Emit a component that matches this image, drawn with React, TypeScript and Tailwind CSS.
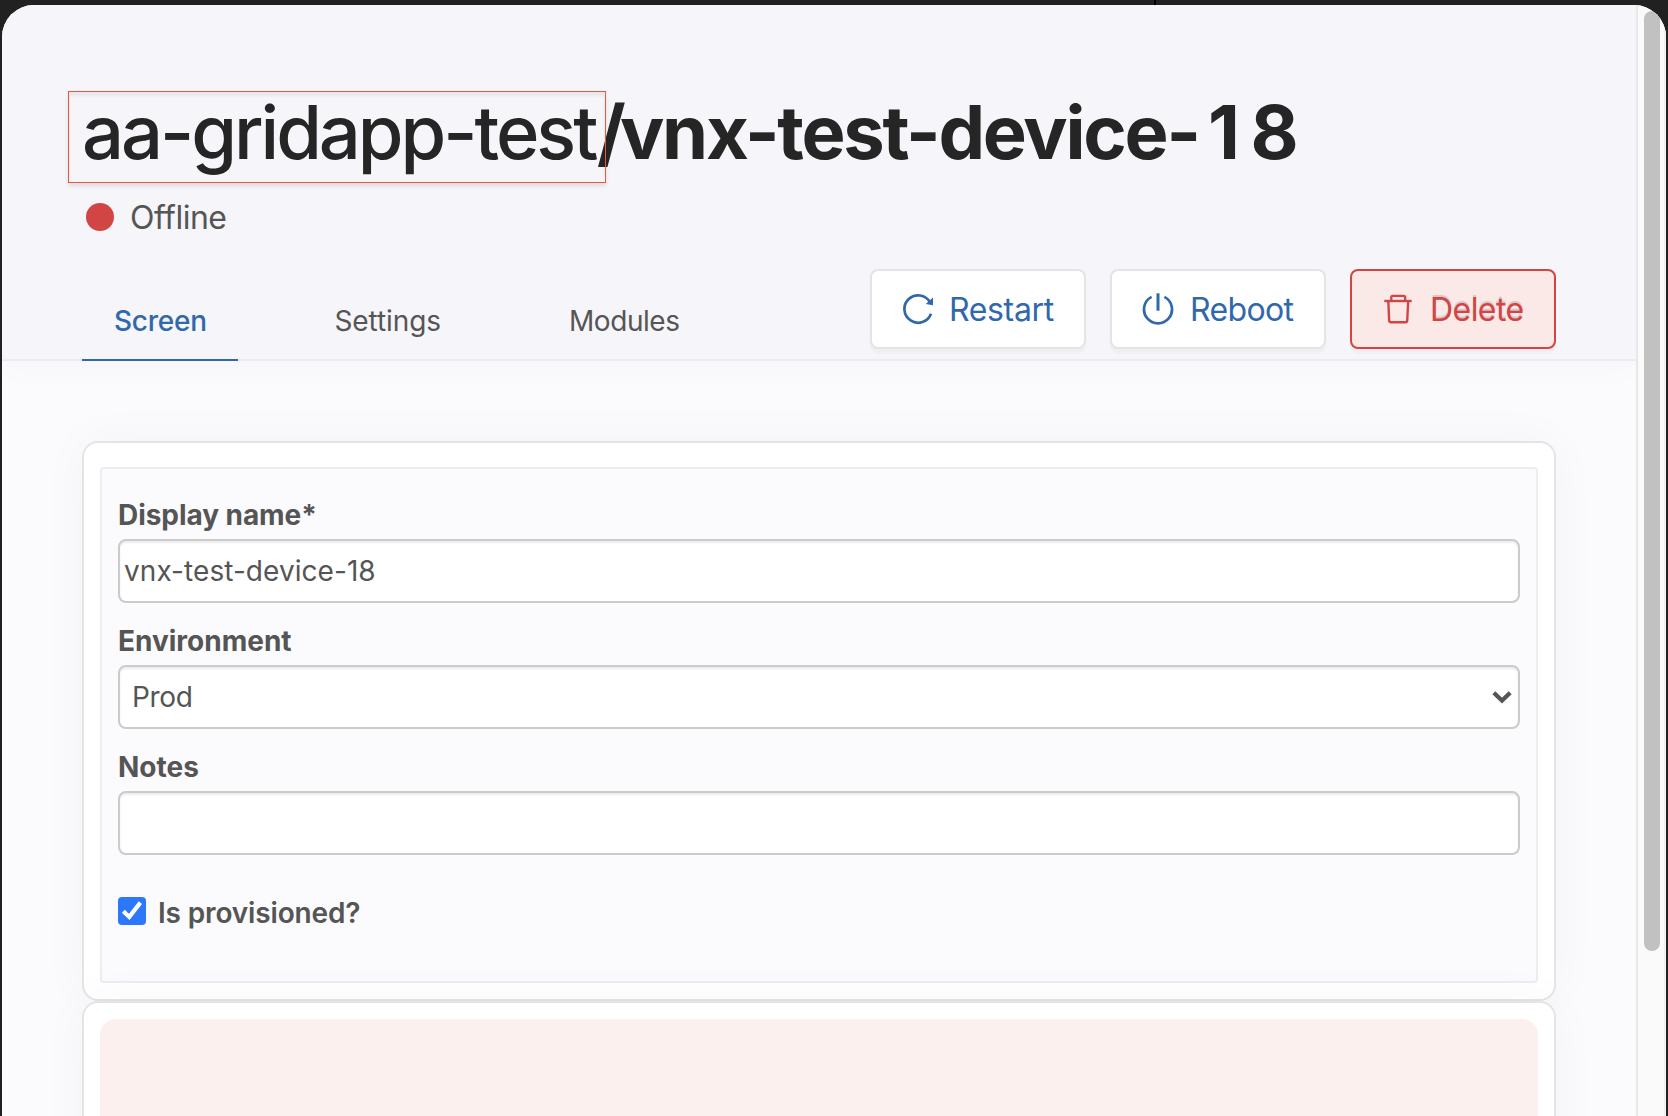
import type { ReactNode } from "react";

function RestartIcon() {
  return (
    <svg className="size-8 shrink-0" viewBox="0 0 32 32" fill="none" stroke="currentColor">
      <path d="M28 9.2A13.7 13.7 0 1 0 29 20.7" strokeWidth="2.7" />
      <path d="M31 4.6v7.6l-7.2-1.1z" fill="currentColor" stroke="none" />
    </svg>
  );
}

function PowerIcon() {
  return (
    <svg className="size-8 shrink-0" viewBox="0 0 32 32" fill="none" stroke="currentColor">
      <path d="M9.6 3.9a14 14 0 1 0 12.8 0" strokeWidth="2.7" />
      <path d="M16 .3v17.4" strokeWidth="3" />
    </svg>
  );
}

function TrashIcon() {
  return (
    <svg className="size-8 shrink-0" viewBox="0 0 32 32" fill="none" stroke="currentColor" strokeWidth="2.4">
      <path d="M2.3 8h27.4" />
      <path d="M9.3 7.5V4.2q0-1.3 1.3-1.3h11.2q1.3 0 1.3 1.3v3.3" />
      <path d="M6.3 8l.9 20q.1 1.2 1.3 1.2h15.4q1.2 0 1.3-1.2l1-20" />
    </svg>
  );
}

function Label({ children, className = "" }: { children: ReactNode; className?: string }) {
  return <label className={`block h-9 text-[28px] leading-9 font-bold ${className}`}>{children}</label>;
}

const field =
  "block h-16 w-full rounded-lg border-2 border-[#cbcbcb] bg-white text-[28px] text-[#555] shadow-[inset_0_2px_2px_rgba(0,0,0,0.075)] outline-none";

const button =
  "flex h-20 items-center rounded-lg border-2 pl-[30px] text-[32px] leading-10 shadow-[0_4px_2px_rgba(0,0,0,0.03)]";

export default function App() {
  return (
    <div className="h-[1116px] overflow-hidden bg-[#212121] font-['Inter',sans-serif] text-[#555]">
      <div className="flex h-[5px] pl-[1154px]">
        <div className="w-0.5 bg-black" />
      </div>
      <div className="mx-0.5 flex h-[1111px] overflow-hidden rounded-t-[32px] bg-[#fbfbfd]">
        <main className="w-[1634px] overflow-hidden">
          <header className="flex h-[356px] flex-col border-b-2 border-[#e8edf3] bg-[#f5f5fa] pt-[86px] pl-20 shadow-[0_0_40px_rgba(0,0,0,0.03)]">
            <h1 className="relative flex h-[82px] text-[74px] leading-[82px] whitespace-nowrap text-[#252525]">
              <span className="w-[515px] font-medium tracking-[-3.03px]">aa-gridapp-test</span>
              <span className="w-[23px] font-bold">/</span>
              <span className="w-[588px] font-bold tracking-[-2.25px]">vnx-test-device-</span>
              <span className="font-bold tracking-[10.5px]">18</span>
              <span className="absolute top-0 -left-3.5 h-[92px] w-[538px] border border-[#e8583f] shadow-[0_3px_4px_rgba(0,0,0,0.1),inset_0_4px_3px_rgba(0,0,0,0.06)]" />
            </h1>
            <div className="mt-6 flex h-10 items-center gap-4 pl-1 text-[32px] tracking-[-0.5px]">
              <span className="size-7 rounded-full bg-[#d24545]" />
              <span className="pt-0.5">Offline</span>
            </div>
            <div className="mt-8 flex h-[92px] justify-between pr-20">
              <nav className="flex h-[92px] items-end gap-16 text-[28px] leading-9">
                <a className="h-[58px] w-[156px] border-b-2 border-[#3168ab] px-8 font-medium tracking-[-0.25px] text-[#3168ab]">
                  Screen
                </a>
                <a className="h-[58px] w-[171px] pl-[32.5px] tracking-[-0.09px]">Settings</a>
                <a className="h-[58px] px-8 tracking-[-0.45px]">Modules</a>
              </nav>
              <div className="flex gap-6">
                <button
                  className={`${button} w-[216px] gap-[15px] border-[#e4e4e4] bg-white tracking-[-0.35px] text-[#3168ab]`}
                >
                  <RestartIcon />
                  <span className="pt-0.5">Restart</span>
                </button>
                <button
                  className={`${button} w-[216px] gap-4 border-[#e4e4e4] bg-white tracking-[-0.65px] text-[#3168ab]`}
                >
                  <PowerIcon />
                  <span className="pt-0.5">Reboot</span>
                </button>
                <button
                  className={`${button} w-[206px] gap-4 border-[#d24545] bg-[#fbe9e7] tracking-[-0.55px] text-[#d24545]`}
                >
                  <TrashIcon />
                  <span className="pt-0.5 [text-shadow:0_-2px_1px_rgba(0,0,0,0.15)]">Delete</span>
                </button>
              </div>
            </div>
          </header>

          <div className="px-20 pt-20">
            <section className="h-[560px] rounded-2xl border-2 border-[#e4e4e4] bg-white px-4 pt-6 shadow-[0_0_50px_rgba(0,0,0,0.035)]">
              <form className="h-[516px] rounded border-2 border-[#ececf3] bg-[#fbfbfd] px-4 pt-7">
                <Label className="tracking-[-0.06px]">Display name*</Label>
                <input className={`${field} mt-1.5 pl-1 tracking-[0.06px]`} defaultValue="vnx-test-device-18" />
                <Label className="mt-5">Environment</Label>
                <div className="relative mt-1.5">
                  <select className={`${field} appearance-none pl-3 tracking-[-0.3px]`}>
                    <option>Prod</option>
                  </select>
                  <svg
                    className="pointer-events-none absolute top-[26px] right-2 h-3.5 w-5"
                    viewBox="0 0 20 14"
                    fill="none"
                    stroke="#555"
                    strokeWidth="4.2"
                  >
                    <path d="M1.8 1.8L10 9.6l8.2-7.8" />
                  </svg>
                </div>
                <Label className="mt-5">Notes</Label>
                <input className={`${field} mt-1.5 pl-1`} />
                <div className="mt-[42px] flex gap-3">
                  <span className="flex size-7 rounded bg-[#2b78fb]">
                    <svg className="size-7" viewBox="0 0 28 28" fill="none" stroke="#fff" strokeWidth="4.2">
                      <path d="M5.3 14.2l6 5.7L22.4 5.6" />
                    </svg>
                  </span>
                  <span className="mt-0.5 text-[28px] leading-7 font-semibold tracking-[-0.15px]">Is provisioned?</span>
                </div>
              </form>
            </section>
            <section className="h-[400px] rounded-2xl border-2 border-[#e4e4e4] bg-white p-4 shadow-[0_0_50px_rgba(0,0,0,0.035)]">
              <div className="h-full rounded-2xl bg-[#fcf0ee]" />
            </section>
          </div>
        </main>
        <div className="w-[30px] border-r-2 border-l-2 border-r-[#f1f1f1] border-l-[#e8e8e8] bg-[#fafafa] pt-1.5 pl-1.5">
          <div className="h-[940px] w-4 rounded-full bg-[#c1c1c1]" />
        </div>
      </div>
    </div>
  );
}
